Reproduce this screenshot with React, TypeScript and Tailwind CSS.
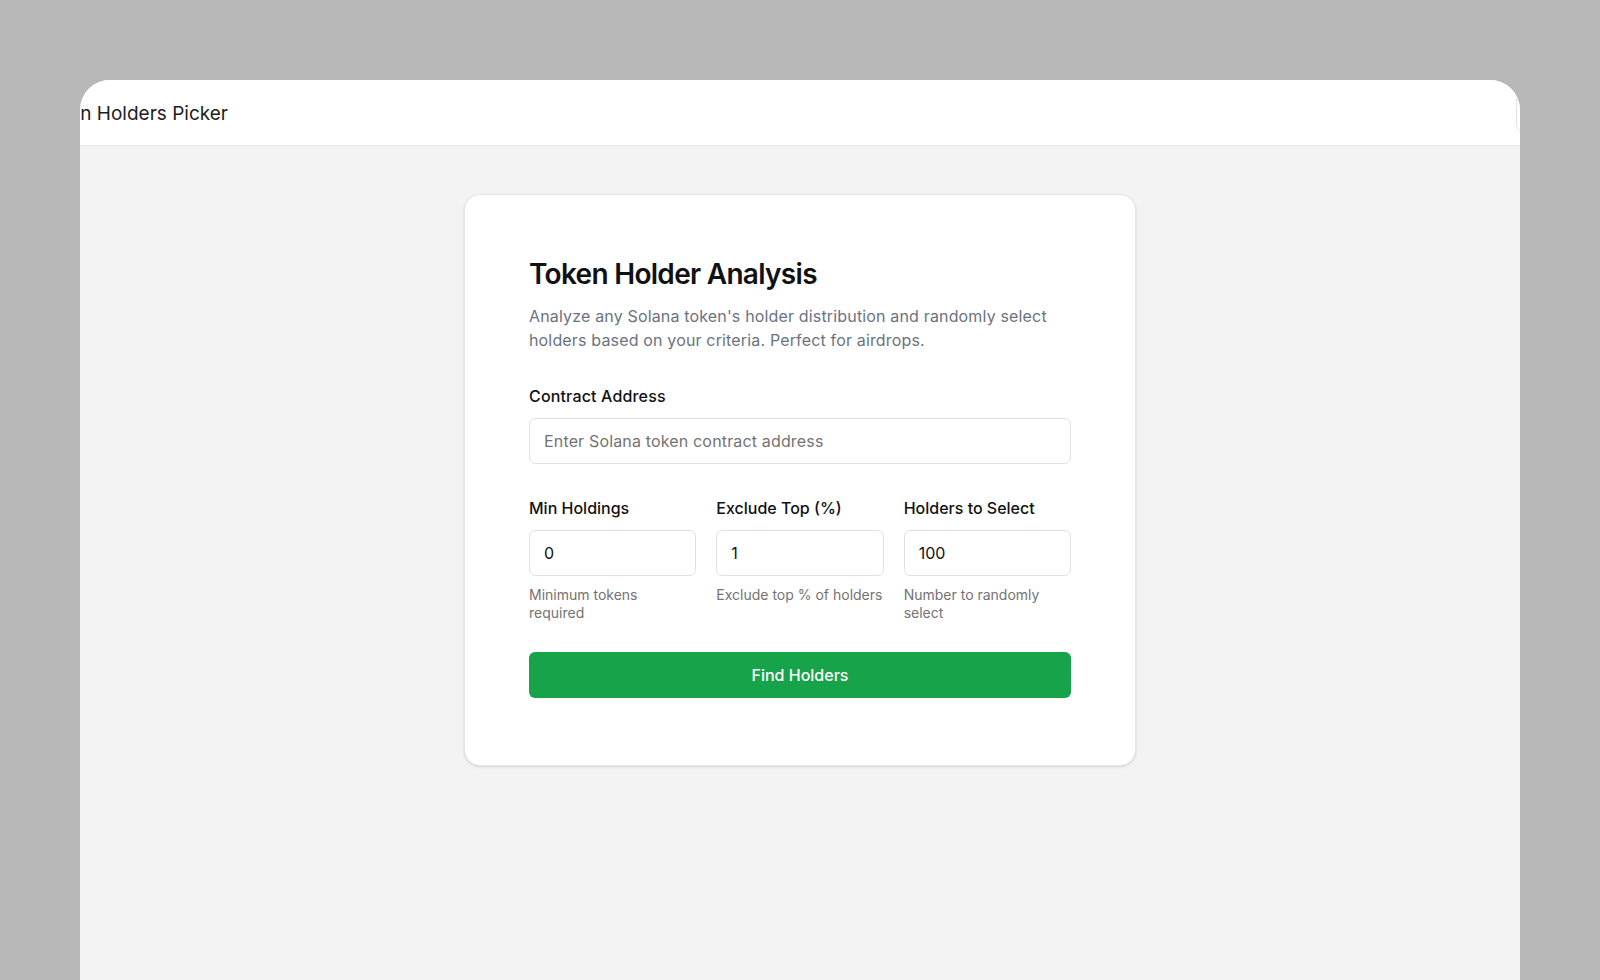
const fields = [
  { label: 'Min Holdings', value: '0', hint: 'Minimum tokens required' },
  { label: 'Exclude Top (%)', value: '1', hint: 'Exclude top % of holders' },
  { label: 'Holders to Select', value: '100', hint: 'Number to randomly select' },
];

const App = () => {
  return (
    <div className="h-[980px] w-full overflow-hidden bg-[#b8b8b8] pt-20 px-20 font-['Inter',sans-serif]">
      <div className="h-full rounded-t-[30px] overflow-hidden bg-[#f3f3f3] flex flex-col">
        <header className="h-[66px] shrink-0 bg-white border-b border-[#e5e5e5] flex items-center justify-between">
          <h1 className="ml-[-43px] mt-1 text-[19px] text-[#1c1c1c] whitespace-nowrap">Token Holders Picker</h1>
          <div className="mr-[-96px] w-[100px] h-10 rounded-lg border border-[#e2e2e2]" />
        </header>

        <main className="flex justify-center pt-12">
          <div className="w-[672px] bg-white border border-[#e5e5e5] rounded-2xl shadow-sm px-16 pt-[61px] pb-[67px]">
            <h2 className="text-[28px] leading-9 font-semibold tracking-tight text-[#111]">Token Holder Analysis</h2>
            <p className="mt-3 text-base leading-6 tracking-[0.01em] text-[#6b7280]">
              Analyze any Solana token's holder distribution and randomly select holders based on your criteria. Perfect for airdrops.
            </p>

            <label className="block mt-8 mb-2.5 text-base leading-6 font-medium tracking-[0.01em] text-[#111]">Contract Address</label>
            <input
              type="text"
              placeholder="Enter Solana token contract address"
              className="w-full h-[46px] px-3.5 rounded-md border border-[#e2e2e2] text-base tracking-[0.01em] text-[#111] placeholder:text-[#737373] outline-none"
            />

            <div className="mt-8 grid grid-cols-3 gap-5">
              {fields.map((f) => (
                <div key={f.label}>
                  <label className="block mb-2.5 text-base leading-6 font-medium text-[#111]">{f.label}</label>
                  <input
                    type="text"
                    defaultValue={f.value}
                    className="w-full h-[46px] px-3.5 rounded-md border border-[#e2e2e2] text-base text-[#111] outline-none"
                  />
                  <p className="mt-2.5 text-sm leading-[18px] text-[#737373]">{f.hint}</p>
                </div>
              ))}
            </div>

            <button className="mt-[30px] w-full h-[46px] rounded-md bg-[#16a34a] text-white text-base font-medium">
              Find Holders
            </button>
          </div>
        </main>
      </div>
    </div>
  );
};

export default App;
